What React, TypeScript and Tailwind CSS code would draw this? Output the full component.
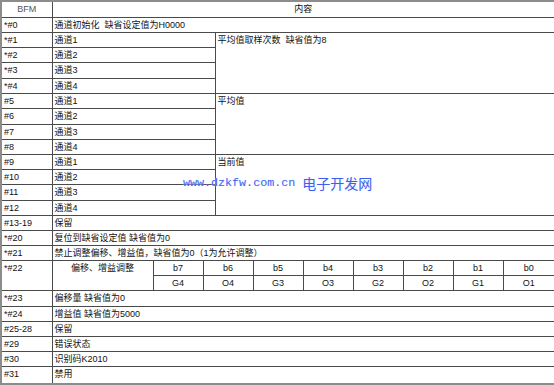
import React from 'react';

const cell = 'border border-[#4a4a4a] px-[2px] py-0 align-top text-left font-normal';

const channelRows = [
    { group: '平均值取样次数  缺省值为8', items: ['*#1', '*#2', '*#3', '*#4'] },
    { group: '平均值', items: ['#5', '#6', '#7', '#8'] },
    { group: '当前值', items: ['#9', '#10', '#11', '#12'] },
];

const bits = ['b7', 'b6', 'b5', 'b4', 'b3', 'b2', 'b1', 'b0'];
const codes = ['G4', 'O4', 'G3', 'O3', 'G2', 'O2', 'G1', 'O1'];

const heights = [15, 15, 16, 15, 15, 16, 15, 15, 15, 15, 16, 15];

const App: React.FC = () => {
    return (
        <div className="relative w-[554px] h-[385px] bg-white overflow-hidden text-[#111]" style={{ fontFamily: '"Liberation Sans", "Noto Sans CJK SC", sans-serif' }}>
            <table className="table-fixed border-collapse border-2 border-[#8c8c8c] w-[554px] text-[9px] leading-[14px]">
                <colgroup>
                    <col className="w-[51px]" />
                    <col className="w-[101px]" />
                    <col className="w-[50px]" />
                    <col className="w-[12px]" />
                    <col className="w-[38px]" />
                    <col className="w-[50px]" />
                    <col className="w-[50px]" />
                    <col className="w-[50px]" />
                    <col className="w-[50px]" />
                    <col className="w-[50px]" />
                    <col className="w-[52px]" />
                </colgroup>
                <tbody>
                    <tr className="h-[16px]">
                        <th className={`${cell} !text-center text-[#555]`}>BFM</th>
                        <th colSpan={10} className={`${cell} !text-center`}>内容</th>
                    </tr>
                    <tr className="h-[15px]">
                        <td className={cell}>*#0</td>
                        <td colSpan={10} className={`${cell} whitespace-pre`}>通道初始化  缺省设定值为H0000</td>
                    </tr>
                    {channelRows.map((g, gi) =>
                        g.items.map((id, i) => (
                            <tr key={id} style={{ height: heights[gi * 4 + i] }}>
                                <td className={cell}>{id}</td>
                                <td colSpan={3} className={cell}>通道{i + 1}</td>
                                {i === 0 && (
                                    <td colSpan={7} rowSpan={4} className={`${cell} whitespace-pre`}>{g.group}</td>
                                )}
                            </tr>
                        ))
                    )}
                    <tr className="h-[15px]">
                        <td className={cell}>#13-19</td>
                        <td colSpan={10} className={cell}>保留</td>
                    </tr>
                    <tr className="h-[15px]">
                        <td className={cell}>*#20</td>
                        <td colSpan={10} className={cell}>复位到缺省设定值 缺省值为0</td>
                    </tr>
                    <tr className="h-[15px]">
                        <td className={cell}>*#21</td>
                        <td colSpan={10} className={cell}>禁止调整偏移、增益值，缺省值为0（1为允许调整）</td>
                    </tr>
                    <tr className="h-[15px]">
                        <td rowSpan={2} className={cell}>*#22</td>
                        <td rowSpan={2} className={`${cell} !text-center`}>偏移、增益调整</td>
                        {bits.map((b, i) => (
                            <td key={b} colSpan={i === 1 ? 2 : 1} className={`${cell} !text-center`}>{b}</td>
                        ))}
                    </tr>
                    <tr className="h-[15px]">
                        {codes.map((c, i) => (
                            <td key={c} colSpan={i === 1 ? 2 : 1} className={`${cell} !text-center`}>{c}</td>
                        ))}
                    </tr>
                    <tr className="h-[16px]">
                        <td className={cell}>*#23</td>
                        <td colSpan={10} className={cell}>偏移量 缺省值为0</td>
                    </tr>
                    <tr className="h-[15px]">
                        <td className={cell}>*#24</td>
                        <td colSpan={10} className={cell}>增益值 缺省值为5000</td>
                    </tr>
                    <tr className="h-[15px]">
                        <td className={cell}>#25-28</td>
                        <td colSpan={10} className={cell}>保留</td>
                    </tr>
                    <tr className="h-[15px]">
                        <td className={cell}>#29</td>
                        <td colSpan={10} className={cell}>错误状态</td>
                    </tr>
                    <tr className="h-[15px]">
                        <td className={cell}>#30</td>
                        <td colSpan={10} className={cell}>识别码K2010</td>
                    </tr>
                    <tr className="h-[18px]">
                        <td className={cell}>#31</td>
                        <td colSpan={10} className={cell}>禁用</td>
                    </tr>
                </tbody>
            </table>

            {/* watermark */}
            <div className="absolute left-[183px] top-[175px] flex items-center gap-[7px] text-[#3f5ff0] [text-shadow:0_0_2px_#dfe6ff]">
                <span className="text-[11.7px] leading-[16px]" style={{ fontFamily: '"Liberation Mono", monospace' }}>www.dzkfw.com.cn</span>
                <span className="text-[14px] leading-[16px]" style={{ fontFamily: '"Noto Sans CJK SC", sans-serif' }}>电子开发网</span>
            </div>
        </div>
    );
};

export default App;
